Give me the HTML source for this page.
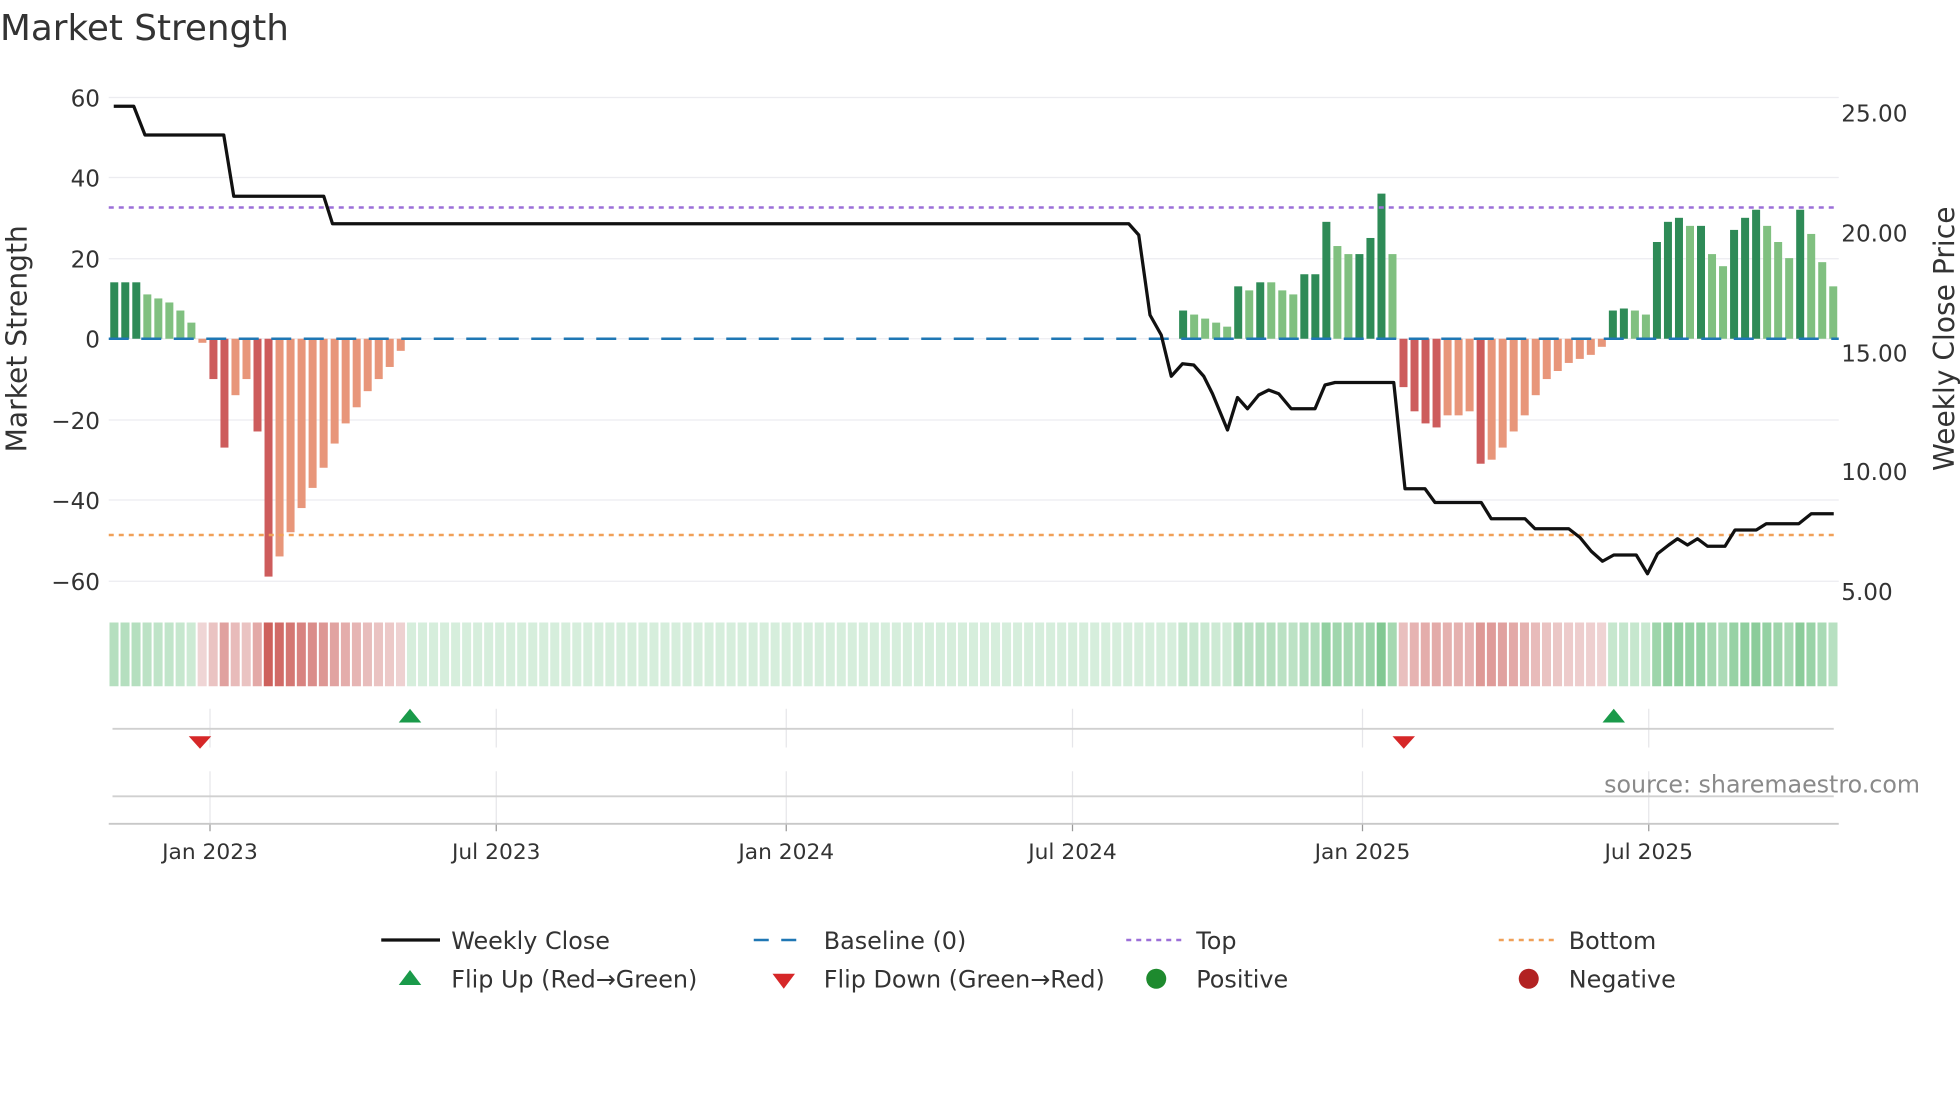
<!DOCTYPE html>
<html><head><meta charset="utf-8"><style>
html,body{margin:0;padding:0;background:#fff;}
svg{display:block;font-family:"DejaVu Sans","Liberation Sans",sans-serif;}
</style></head><body>
<svg id="s" width="1960" height="1102" viewBox="0 0 1568 881.6" xmlns="http://www.w3.org/2000/svg">
<text x="0" y="32" font-size="28.6" fill="#333">Market Strength</text>
<g id="grid" stroke="#ececf0" stroke-width="1"></g>
<g id="bars"></g>
<line x1="87" y1="271" x2="1471" y2="271" stroke="#1f77b4" stroke-width="2" stroke-dasharray="16,10"/>
<line x1="87" y1="166" x2="1471" y2="166" stroke="#9b6fd8" stroke-width="2" stroke-dasharray="4,4"/>
<line x1="87" y1="428" x2="1471" y2="428" stroke="#f0a058" stroke-width="2" stroke-dasharray="4,4"/>
<polyline id="close" fill="none" stroke="#111" stroke-width="2.6" stroke-linejoin="round"/>
<g font-size="18.5" fill="#333" text-anchor="end">
<text x="80" y="85">60</text><text x="80" y="149">40</text><text x="80" y="214">20</text><text x="80" y="278">0</text>
<text x="80" y="343">−20</text><text x="80" y="407">−40</text><text x="80" y="472">−60</text>
</g>
<g font-size="18.5" fill="#333">
<text x="1473" y="97">25.00</text><text x="1473" y="193">20.00</text><text x="1473" y="289">15.00</text>
<text x="1473" y="384">10.00</text><text x="1473" y="480">5.00</text>
</g>
<text transform="translate(21,271) rotate(-90)" font-size="22.5" fill="#333" text-anchor="middle">Market Strength</text>
<text transform="translate(1563,271) rotate(-90)" font-size="22.5" fill="#333" text-anchor="middle">Weekly Close Price</text>
<g id="heat"></g>
<g stroke="#e6e6ea" stroke-width="1" id="vgrid"></g>
<line x1="90" y1="583" x2="1467" y2="583" stroke="#d0d0d0" stroke-width="1.5"/>
<line x1="90" y1="637" x2="1467" y2="637" stroke="#d0d0d0" stroke-width="1.5"/>
<line x1="87" y1="659" x2="1471" y2="659" stroke="#c8c8c8" stroke-width="1.5"/>
<polygon points="151,589 169,589 160,599" fill="#d62728"/>
<polygon points="319,578 337,578 328,567" fill="#1a9a4a"/>
<polygon points="1114,589 1132,589 1123,599" fill="#d62728"/>
<polygon points="1282,578 1300,578 1291,567" fill="#1a9a4a"/>
<text x="1536" y="634" font-size="19" fill="#8a8a8a" text-anchor="end">source: sharemaestro.com</text>
<g font-size="17.4" fill="#333" text-anchor="middle">
<text x="168" y="687">Jan 2023</text><text x="397" y="687">Jul 2023</text><text x="629" y="687">Jan 2024</text>
<text x="858" y="687">Jul 2024</text><text x="1090" y="687">Jan 2025</text><text x="1319" y="687">Jul 2025</text>
</g>
<g font-size="19.1" fill="#333">
<line x1="305" y1="752" x2="352" y2="752" stroke="#111" stroke-width="2.6"/>
<text x="361" y="759">Weekly Close</text>
<line x1="603" y1="752" x2="645" y2="752" stroke="#1f77b4" stroke-width="2" stroke-dasharray="12,10"/>
<text x="659" y="759">Baseline (0)</text>
<line x1="901" y1="752" x2="945" y2="752" stroke="#9b6fd8" stroke-width="2" stroke-dasharray="4,4"/>
<text x="957" y="759">Top</text>
<line x1="1199" y1="752" x2="1243" y2="752" stroke="#f0a058" stroke-width="2" stroke-dasharray="4,4"/>
<text x="1255" y="759">Bottom</text>
<polygon points="319,788 337,788 328,776" fill="#1a9a4a"/>
<text x="361" y="790">Flip Up (Red→Green)</text>
<polygon points="618,779 636,779 627,791" fill="#d62728"/>
<text x="659" y="790">Flip Down (Green→Red)</text>
<circle cx="925" cy="783" r="8" fill="#1e8a2e"/>
<text x="957" y="790">Positive</text>
<circle cx="1223" cy="783" r="8" fill="#b22222"/>
<text x="1255" y="790">Negative</text>
</g>
</svg>
<script>
var NS="http://www.w3.org/2000/svg";
function el(p,t,a){var e=document.createElementNS(NS,t);for(var k in a)e.setAttribute(k,a[k]);p.appendChild(e);return e;}
var g=document.getElementById('grid');
[78,142,207,271,336,400,465].forEach(function(y){el(g,'line',{x1:87,x2:1471,y1:y,y2:y});});
var vg=document.getElementById('vgrid');
[168,397,629,858,1090,1319].forEach(function(x){el(vg,'line',{x1:x,x2:x,y1:567,y2:598});el(vg,'line',{x1:x,x2:x,y1:617,y2:660});el(vg,'line',{x1:x,x2:x,y1:659,y2:665,stroke:'#999'});});
var D=[];
function add(arr){arr.forEach(function(v){D.push(v);});}
add([[14,1],[14,1],[14,1],[11,0],[10,0],[9,0],[7,0],[4,0],[-1,0]]);
add([[-10,1],[-27,1],[-14,0],[-10,0],[-23,1],[-59,1],[-54,0],[-48,0],[-42,0],[-37,0],[-32,0],[-26,0],[-21,0],[-17,0],[-13,0],[-10,0],[-7,0],[-3,0]]);
while(D.length<97)D.push([0,0]);
add([[7,1],[6,0],[5,0],[4,0],[3,0],[13,1],[12,0],[14,1],[14,0],[12,0],[11,0],[16,1],[16,1],[29,1],[23,0],[21,0],[21,1],[25,1],[36,1],[21,0]]);
add([[-12,1],[-18,1],[-21,1],[-22,1],[-19,0],[-19,0],[-18,0],[-31,1],[-30,0],[-27,0],[-23,0],[-19,0],[-14,0],[-10,0],[-8,0],[-6,0],[-5,0],[-4,0],[-2,0]]);
add([[7,1],[7.5,1],[7,0],[6,0],[24,1],[29,1],[30,1],[28,0],[28,1],[21,0],[18,0],[27,1],[30,1],[32,1],[28,0],[24,0],[20,0],[32,1],[26,0],[19,0],[13,0]]);
var b=document.getElementById('bars'),h=document.getElementById('heat');
var sp=(1471-87)/D.length;
D.forEach(function(d,i){
 var v=d[0],x=87+sp*(i+0.5),w=6.4,y0=271,hh=Math.abs(v)*3.225;
 if(v!==0){el(b,'rect',{x:x-w/2,y:v>0?y0-hh:y0,width:w,height:hh,fill:v>0?(d[1]?'#2e8b57':'#80c080'):(d[1]?'#cd5c5c':'#e8967a')});}
 var c;
 if(v>=0){var a=Math.min(1,v/40);var r=Math.round(214-(214-120)*a),gg=Math.round(238-(238-196)*a),bb=Math.round(220-(220-138)*a);c='rgb('+r+','+gg+','+bb+')';}
 else{var a=Math.min(1,-v/60);var r=Math.round(240-(240-205)*a),gg=Math.round(215-(215-95)*a),bb=Math.round(215-(215-90)*a);c='rgb('+r+','+gg+','+bb+')';}
 el(h,'rect',{x:87+sp*i+0.6,y:498,width:sp-1.6,height:51,fill:c});
});
var P=[[91,85],[107,85],[116,108],[179,108],[187,157],[259,157],[266,179],[903,179],[911,188],[920,252],[929,268],[937,301],[946,291],[955,292],[963,301],[970,315],[982,344],[990,318],[998,327],[1007,316],[1015,312],[1023,315],[1033,327],[1052,327],[1060,308],[1068,306],[1115,306],[1124,391],[1140,391],[1148,402],[1185,402],[1193,415],[1220,415],[1228,423],[1255,423],[1264,430],[1273,441],[1282,449],[1291,444],[1309,444],[1318,459],[1326,443],[1335,436],[1342,431],[1350,436],[1358,431],[1366,437],[1380,437],[1388,424],[1405,424],[1413,419],[1439,419],[1449,411],[1467,411]];
document.getElementById('close').setAttribute('points',P.map(function(p){return p.join(',');}).join(' '));
</script>
</body></html>
